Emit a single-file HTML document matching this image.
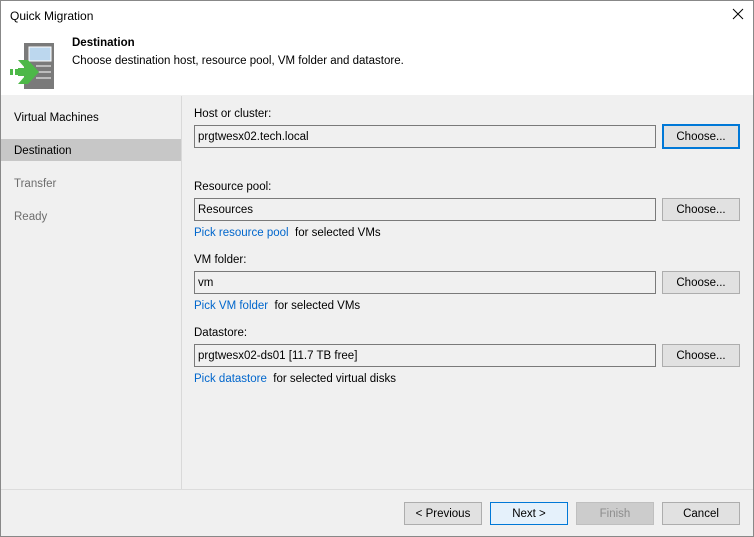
<!DOCTYPE html><html><head><style>
body{margin:0;width:754px;height:537px;overflow:hidden;font-family:"Liberation Sans",sans-serif;font-size:11.5px;color:#000;line-height:15px;}
.win{position:absolute;left:0;top:0;width:752px;height:535px;border:1px solid #888;background:#f0f0f0;}
.hdr{position:absolute;left:0;top:0;width:752px;height:94px;background:#fff;}
.abs{position:absolute;}
.in{position:absolute;left:193px;width:457px;height:21px;border:1px solid #7a7a7a;background:#f0f0f0;line-height:22px;padding-left:3px;}
.btn{position:absolute;width:76px;height:21px;border:1px solid #adadad;background:#e1e1e1;text-align:center;line-height:22px;}
.lnk{color:#0066cc;}
</style></head><body><div class="win">
<div class="hdr">
<div class="abs" style="left:9px;top:8px;font-size:12px">Quick Migration</div>
<svg class="abs" style="left:731px;top:7px" width="12" height="12"><path d="M1 1L11 11M11 1L1 11" stroke="#000" stroke-width="1"/></svg>
<svg class="abs" style="left:0;top:0" width="60" height="94">
<rect x="23" y="42" width="30" height="46" fill="#7a7a7a"/>
<rect x="28" y="46" width="22" height="14" fill="#bcd7ee" stroke="#fff"/>
<line x1="35" y1="65" x2="50" y2="65" stroke="#fff"/><line x1="35" y1="71" x2="50" y2="71" stroke="#fff"/><line x1="35" y1="77" x2="50" y2="77" stroke="#fff"/>
<polygon points="17,59 27,59 38,71 27,83 17,83 24,75 17,75 17,67 24,67" fill="#4db848"/>
<rect x="9" y="68" width="3" height="6" fill="#4db848"/><rect x="14" y="68" width="3" height="6" fill="#4db848"/>
</svg>
<div class="abs" style="left:71px;top:35px;font-weight:bold">Destination</div>
<div class="abs" style="left:71px;top:53px">Choose destination host, resource pool, VM folder and datastore.</div>
</div>
<div class="abs" style="left:180px;top:95px;width:1px;height:393px;background:#d9d9d9"></div>
<div class="abs" style="left:13px;top:110px">Virtual Machines</div>
<div class="abs" style="left:0;top:138px;width:180px;height:22px;background:#c7c7c7"></div>
<div class="abs" style="left:13px;top:143px">Destination</div>
<div class="abs" style="left:13px;top:176px;color:#6d6d6d">Transfer</div>
<div class="abs" style="left:13px;top:209px;color:#6d6d6d">Ready</div>

<div class="abs" style="left:193px;top:106px">Host or cluster:</div>
<div class="in" style="top:124px">prgtwesx02.tech.local</div>
<div class="btn" style="left:661px;top:123px;border:2px solid #0078d7;width:74px">Choose...</div>
<div class="abs" style="left:193px;top:179px">Resource pool:</div>
<div class="in" style="top:197px">Resources</div>
<div class="btn" style="left:661px;top:197px">Choose...</div>
<div class="abs" style="left:193px;top:225px"><span class="lnk">Pick resource pool</span>&nbsp; for selected VMs</div>
<div class="abs" style="left:193px;top:252px">VM folder:</div>
<div class="in" style="top:270px">vm</div>
<div class="btn" style="left:661px;top:270px">Choose...</div>
<div class="abs" style="left:193px;top:298px"><span class="lnk">Pick VM folder</span>&nbsp; for selected VMs</div>
<div class="abs" style="left:193px;top:325px">Datastore:</div>
<div class="in" style="top:343px">prgtwesx02-ds01 [11.7 TB free]</div>
<div class="btn" style="left:661px;top:343px">Choose...</div>
<div class="abs" style="left:193px;top:371px"><span class="lnk">Pick datastore</span>&nbsp; for selected virtual disks</div>

<div class="abs" style="left:0;top:488px;width:752px;height:1px;background:#dcdcdc"></div>
<div class="btn" style="left:403px;top:501px">&lt; Previous</div>
<div class="btn" style="left:489px;top:501px;border-color:#0078d7;background:#e5f1fb">Next &gt;</div>
<div class="btn" style="left:575px;top:501px;border-color:#bfbfbf;background:#cccccc;color:#8d8d8d">Finish</div>
<div class="btn" style="left:661px;top:501px">Cancel</div>
</div></body></html>
